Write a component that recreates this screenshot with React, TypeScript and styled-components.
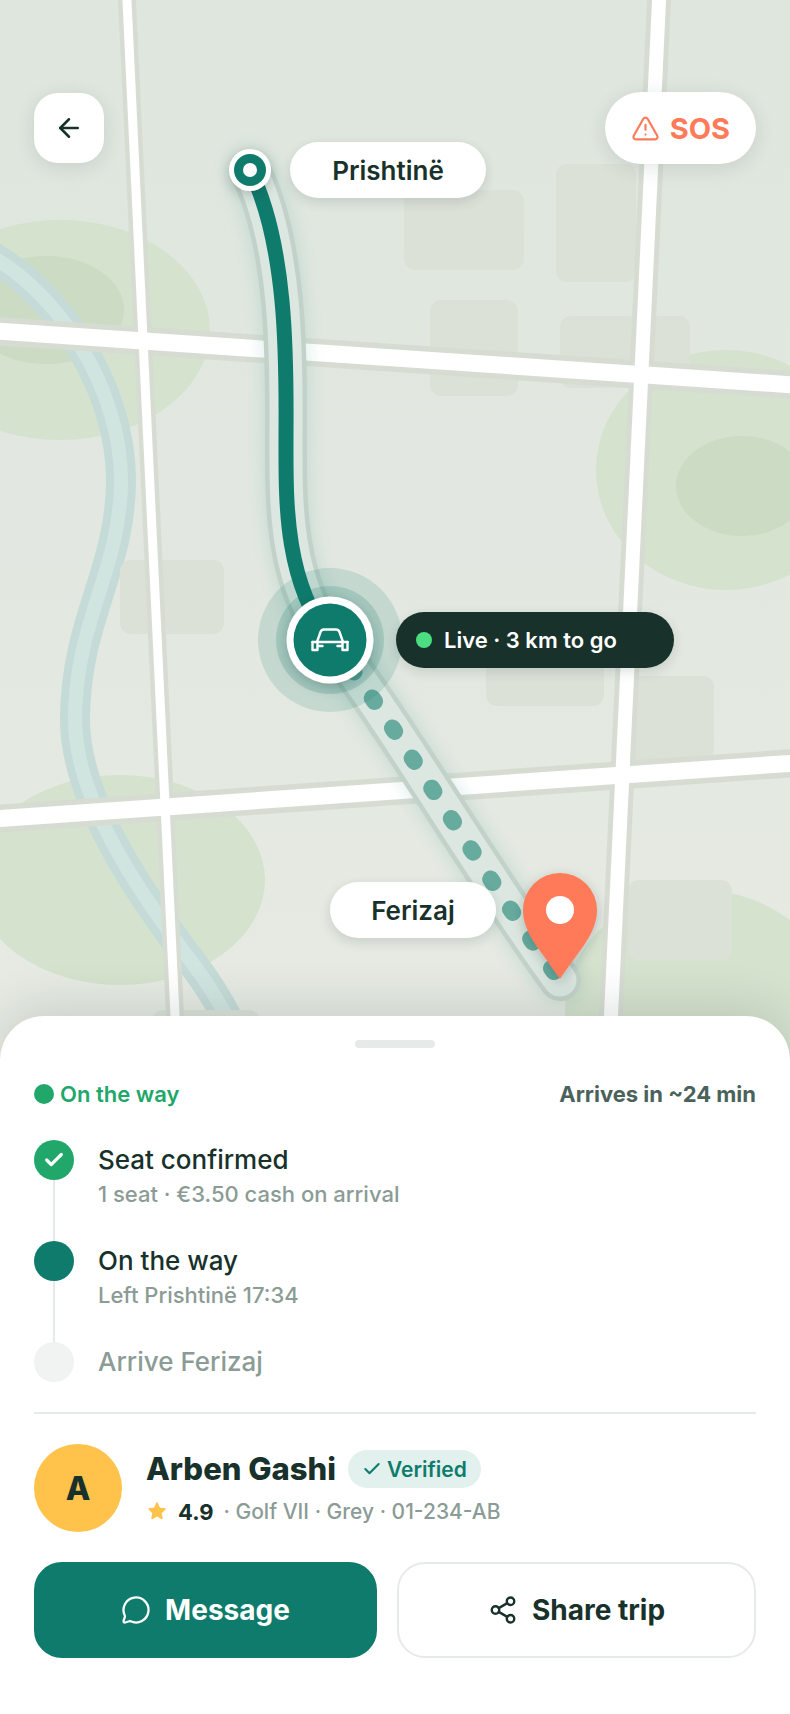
import React from 'react';
import styled, { createGlobalStyle } from 'styled-components';
import { ArrowLeft, Check, MessageCircle, Share2, TriangleAlert } from 'lucide-react';

const COLORS = {
    TEAL: '#0f7b6c',
    INK: '#18312b',
    MUTED: '#8b9b95',
    SLATE: '#4a625b',
    GREEN: '#21a76a',
    CORAL: '#ff7a59',
    AMBER: '#ffc24b',
    LINE: '#e6ebe9',
};

const MAP_WIDTH = 790;
const MAP_HEIGHT = 1060;

const GlobalStyle = createGlobalStyle`
    * {
        box-sizing: border-box;
    }

    body {
        margin: 0;
        background: #ffffff;
        color: ${COLORS.INK};
        font-family: Inter, "Liberation Sans", sans-serif;
    }

    button {
        font-family: inherit;
        cursor: pointer;
    }
`;

const Map = styled.section`
    position: relative;
    width: 100%;
    aspect-ratio: ${MAP_WIDTH} / ${MAP_HEIGHT};
    overflow: hidden;
`;

const MapSvg = styled.svg`
    position: absolute;
    top: 0;
    left: 0;
    width: 100%;
    height: 100%;
`;

const TopBar = styled.header`
    position: relative;
    display: flex;
    justify-content: space-between;
    align-items: center;
    padding: 92px 34px;
`;

const BackButton = styled.button`
    display: flex;
    align-items: center;
    justify-content: center;
    width: 70px;
    height: 70px;
    border: none;
    border-radius: 24px;
    background: #ffffff;
    color: ${COLORS.INK};
    box-shadow: 0 4px 20px rgba(24, 49, 43, 0.12);
`;

const SosButton = styled.button`
    display: flex;
    align-items: center;
    gap: 10px;
    height: 72px;
    padding: 0 26px;
    border: none;
    border-radius: 36px;
    background: #ffffff;
    color: ${COLORS.CORAL};
    font-size: 29px;
    font-weight: 700;
    box-shadow: 0 4px 20px rgba(24, 49, 43, 0.12);
`;

// x and y are in map units, so the labels follow the drawing when it scales
const MapLabel = styled.div<{ x: number; y: number; width: number; $dark?: boolean }>`
    position: absolute;
    left: calc(${p => p.x} / ${MAP_WIDTH} * 100%);
    top: calc(${p => p.y} / ${MAP_HEIGHT} * 100%);
    display: flex;
    align-items: center;
    justify-content: ${p => p.$dark ? 'flex-start' : 'center'};
    gap: 12px;
    min-width: ${p => p.width}px;
    height: 56px;
    padding: 0 20px;
    border-radius: 28px;
    background: ${p => p.$dark ? COLORS.INK : '#ffffff'};
    color: ${p => p.$dark ? '#ffffff' : COLORS.INK};
    font-size: ${p => p.$dark ? 22 : 26}px;
    font-weight: 600;
    white-space: nowrap;
    box-shadow: 0 4px 12px rgba(24, 49, 43, 0.14);
`;

const Dot = styled.span<{ size: number; color: string }>`
    width: ${p => p.size}px;
    height: ${p => p.size}px;
    border-radius: 50%;
    background: ${p => p.color};
`;

const Sheet = styled.main`
    position: relative;
    margin-top: -44px;
    padding: 24px 34px 56px;
    border-radius: 44px 44px 0 0;
    background: #ffffff;
    box-shadow: 0 -8px 48px rgba(24, 49, 43, 0.14);
`;

const Handle = styled.div`
    width: 80px;
    height: 8px;
    margin: 0 auto 30px;
    border-radius: 4px;
    background: ${COLORS.LINE};
`;

const StatusRow = styled.div`
    display: flex;
    justify-content: space-between;
    align-items: center;
    height: 32px;
    margin-bottom: 30px;
    font-size: 22px;
`;

const Status = styled.span`
    display: flex;
    align-items: center;
    gap: 6px;
    color: ${COLORS.GREEN};
    font-weight: 600;
`;

const Eta = styled.span`
    color: ${COLORS.SLATE};
    font-weight: 700;
`;

const Steps = styled.ol`
    margin: 0;
    padding: 0;
    list-style: none;
`;

const StepItem = styled.li`
    display: flex;
    gap: 24px;
`;

const StepTrack = styled.div`
    display: flex;
    flex-direction: column;
    align-items: center;
`;

const StepMarker = styled.span<{ color: string }>`
    display: flex;
    align-items: center;
    justify-content: center;
    width: 40px;
    height: 40px;
    border-radius: 50%;
    background: ${p => p.color};
    color: #ffffff;
`;

const StepLine = styled.span`
    flex: 1;
    width: 2px;
    background: ${COLORS.LINE};
`;

const StepBody = styled.div<{ $last: boolean }>`
    padding-bottom: ${p => p.$last ? 0 : 33}px;
`;

const StepTitle = styled.div<{ $muted: boolean }>`
    color: ${p => p.$muted ? COLORS.MUTED : COLORS.INK};
    font-size: 26px;
    font-weight: 500;
    line-height: 40px;
`;

const StepNote = styled.div`
    color: ${COLORS.MUTED};
    font-size: 22px;
    font-weight: 500;
    line-height: 28px;
`;

const Divider = styled.hr`
    height: 2px;
    margin: 30px 0;
    border: none;
    background: ${COLORS.LINE};
`;

const Driver = styled.div`
    display: flex;
    align-items: center;
    gap: 24px;
    margin-bottom: 30px;
`;

const Avatar = styled.div`
    display: flex;
    align-items: center;
    justify-content: center;
    width: 88px;
    height: 88px;
    border-radius: 50%;
    background: ${COLORS.AMBER};
    font-size: 32px;
    font-weight: 800;
`;

const DriverInfo = styled.div`
    display: flex;
    flex-direction: column;
    gap: 10px;
`;

const NameRow = styled.div`
    display: flex;
    align-items: center;
    gap: 12px;
`;

const Name = styled.h2`
    margin: 0;
    font-size: 31px;
    font-weight: 800;
    line-height: 38px;
`;

const Verified = styled.span`
    display: flex;
    align-items: center;
    gap: 5px;
    height: 38px;
    padding: 0 14px;
    border-radius: 19px;
    background: #e2f1ee;
    color: ${COLORS.TEAL};
    font-size: 21px;
    font-weight: 600;
`;

const Meta = styled.div`
    display: flex;
    align-items: center;
    gap: 10px;
    color: ${COLORS.MUTED};
    font-size: 21px;
    font-weight: 500;
    line-height: 28px;
`;

const Rating = styled.strong`
    color: ${COLORS.INK};
    font-size: 22px;
    font-weight: 700;
`;

const Actions = styled.div`
    display: grid;
    grid-template-columns: 343fr 359fr;
    gap: 20px;
`;

const ActionButton = styled.button<{ $primary?: boolean }>`
    display: flex;
    align-items: center;
    justify-content: center;
    gap: 14px;
    height: 96px;
    border: 2px solid ${p => p.$primary ? COLORS.TEAL : COLORS.LINE};
    border-radius: 28px;
    background: ${p => p.$primary ? COLORS.TEAL : '#ffffff'};
    color: ${p => p.$primary ? '#ffffff' : COLORS.INK};
    font-size: 28px;
    font-weight: 700;
`;

const RIVER = 'M-20 250 C60 290 121 390 121 480 C121 570 75 620 75 720 C75 810 160 920 196 968 C220 1000 240 1040 250 1070';
const DRIVEN = 'M250 170 C290 250 286 380 286 440 C286 500 284 580 330 640';
const AHEAD = 'M330 640 C390 715 486 880 560 980';

const BIG_ROADS = 'M-20 330 L810 386 M-20 820 L810 762';
const WEST_ROAD = 'M126 -20 L179 1100';
const EAST_ROAD = 'M660 -20 L607 1100';

const BLOCKS = [
    [404, 190, 120, 80],
    [556, 164, 80, 118],
    [430, 300, 88, 96],
    [560, 316, 130, 72],
    [120, 560, 104, 74],
    [486, 636, 118, 70],
    [624, 676, 90, 84],
    [628, 880, 104, 80],
    [152, 1010, 108, 70],
];

function MapDrawing() {
    return (
        <MapSvg viewBox={ `0 0 ${MAP_WIDTH} ${MAP_HEIGHT}` } role="img" aria-label="Route from Prishtinë to Ferizaj">
            <defs>
                <linearGradient id="land" x1="0" y1="0" x2="0" y2="1">
                    <stop offset="0" stopColor="#dee6de" />
                    <stop offset="1" stopColor="#e6eae3" />
                </linearGradient>
                <filter id="glow" x="-50%" y="-20%" width="200%" height="140%">
                    <feGaussianBlur stdDeviation="10" />
                </filter>
                <filter id="shadow" x="-50%" y="-50%" width="200%" height="200%">
                    <feDropShadow dx="0" dy="4" stdDeviation="6" floodColor={ COLORS.INK } floodOpacity="0.25" />
                </filter>
            </defs>

            <rect width={ MAP_WIDTH } height={ MAP_HEIGHT } fill="url(#land)" />

            <g fill="#d5e2ce">
                <ellipse cx="60" cy="330" rx="150" ry="110" />
                <ellipse cx="726" cy="470" rx="130" ry="120" />
                <ellipse cx="120" cy="880" rx="145" ry="105" />
                <ellipse cx="700" cy="1010" rx="135" ry="120" />
            </g>
            <g fill="#ccdbc4">
                <ellipse cx="46" cy="310" rx="78" ry="54" />
                <ellipse cx="742" cy="486" rx="66" ry="50" />
            </g>

            <g fill="none">
                <path d={ RIVER } stroke="#c5dbd7" strokeWidth="30" />
                <path d={ RIVER } stroke="#d1e5e0" strokeWidth="14" />
            </g>

            <g fill="#dce1d8">
                { BLOCKS.map(([x, y, width, height]) => (
                    <rect key={ `${x}-${y}` } x={ x } y={ y } width={ width } height={ height } rx="11" />
                )) }
            </g>

            <g fill="none" stroke="#d7dcd3">
                <path d={ BIG_ROADS } strokeWidth="28" />
                <path d={ WEST_ROAD } strokeWidth="18" />
                <path d={ EAST_ROAD } strokeWidth="24" />
            </g>
            <g fill="none" stroke="#ffffff">
                <path d={ BIG_ROADS } strokeWidth="17" />
                <path d={ WEST_ROAD } strokeWidth="9" />
                <path d={ EAST_ROAD } strokeWidth="14" />
            </g>

            <g fill="none" strokeLinecap="round" strokeLinejoin="round">
                <path d={ `${DRIVEN} ${AHEAD}` } stroke={ COLORS.TEAL } strokeWidth="40" opacity="0.16" filter="url(#glow)" />
                <path d={ `${DRIVEN} ${AHEAD}` } stroke="#c3d2c9" strokeWidth="42" />
                <path d={ `${DRIVEN} ${AHEAD}` } stroke="#dbe7e0" strokeWidth="33" />
                <path d={ AHEAD } stroke={ COLORS.TEAL } strokeWidth="17" strokeDasharray="4 32" opacity="0.57" />
                <path d={ DRIVEN } stroke={ COLORS.TEAL } strokeWidth="15" />
            </g>

            <circle cx="250" cy="170" r="21" fill="#ffffff" filter="url(#shadow)" />
            <circle cx="250" cy="170" r="16" fill={ COLORS.TEAL } />
            <circle cx="250" cy="170" r="7" fill="#ffffff" />

            <circle cx="330" cy="640" r="72" fill={ COLORS.TEAL } opacity="0.14" />
            <circle cx="330" cy="640" r="54" fill={ COLORS.TEAL } opacity="0.18" />
            <circle cx="330" cy="640" r="43.5" fill="#ffffff" filter="url(#shadow)" />
            <circle cx="330" cy="640" r="36.5" fill={ COLORS.TEAL } />
            <g fill="none" stroke="#ffffff" strokeWidth="2.4" strokeLinejoin="round" strokeLinecap="round">
                <path d="M317 642 L320.5 632 Q321.5 629.5 324 629.5 H336 Q338.5 629.5 339.5 632 L343 642" />
                <path d="M312.5 642 H347.5" />
                <path d="M312.5 642 V650 H317.5 V642 M342.5 642 V650 H347.5 V642" />
                <path d="M318 646 H322.5 M337.5 646 H342" />
            </g>

            <path
                d="M560 979 C541 950 523 934 523 910 A37 37 0 0 1 597 910 C597 934 579 950 560 979 Z"
                fill={ COLORS.CORAL }
                filter="url(#shadow)"
            />
            <circle cx="560" cy="910" r="14" fill="#ffffff" />
        </MapSvg>
    );
}

function Star() {
    return (
        <svg width="22" height="22" viewBox="0 0 22 22" aria-hidden="true">
            <path
                d="M11 2 L13.4 7.3 L19 8 L14.9 11.900 L16 17.5 L11 14.700 L6 17.5 L7.100 11.900 L3 8 L8.600 7.3 Z"
                fill={ COLORS.AMBER }
                stroke={ COLORS.AMBER }
                strokeWidth="1.5"
                strokeLinejoin="round"
            />
        </svg>
    );
}

interface StepProps {
    title: string;
    note?: string;
    color: string;
    done?: boolean;
    last?: boolean;
}

function Step(props: StepProps) {
    return (
        <StepItem>
            <StepTrack>
                <StepMarker color={ props.color }>
                    { props.done && <Check size={ 22 } strokeWidth={ 3.5 } /> }
                </StepMarker>
                { !props.last && <StepLine /> }
            </StepTrack>
            <StepBody $last={ !!props.last }>
                <StepTitle $muted={ !!props.last }>{ props.title }</StepTitle>
                { props.note && <StepNote>{ props.note }</StepNote> }
            </StepBody>
        </StepItem>
    );
}

export default function App() {
    return (
        <>
            <GlobalStyle />
            <Map>
                <MapDrawing />
                <TopBar>
                    <BackButton type="button" aria-label="Back">
                        <ArrowLeft size={ 30 } strokeWidth={ 2 } />
                    </BackButton>
                    <SosButton type="button">
                        <TriangleAlert size={ 29 } strokeWidth={ 1.8 } />
                        SOS
                    </SosButton>
                </TopBar>
                <MapLabel x={ 290 } y={ 142 } width={ 196 }>Prishtinë</MapLabel>
                <MapLabel x={ 396 } y={ 612 } width={ 278 } $dark>
                    <Dot size={ 16 } color="#4ade80" />
                    Live · 3 km to go
                </MapLabel>
                <MapLabel x={ 330 } y={ 882 } width={ 166 }>Ferizaj</MapLabel>
            </Map>
            <Sheet>
                <Handle />
                <StatusRow>
                    <Status>
                        <Dot size={ 20 } color={ COLORS.GREEN } />
                        On the way
                    </Status>
                    <Eta>Arrives in ~24 min</Eta>
                </StatusRow>
                <Steps>
                    <Step title="Seat confirmed" note="1 seat · €3.50 cash on arrival" color={ COLORS.GREEN } done />
                    <Step title="On the way" note="Left Prishtinë 17:34" color={ COLORS.TEAL } />
                    <Step title="Arrive Ferizaj" color="#f0f3f2" last />
                </Steps>
                <Divider />
                <Driver>
                    <Avatar>A</Avatar>
                    <DriverInfo>
                        <NameRow>
                            <Name>Arben Gashi</Name>
                            <Verified>
                                <Check size={ 20 } strokeWidth={ 2.5 } />
                                Verified
                            </Verified>
                        </NameRow>
                        <Meta>
                            <Star />
                            <Rating>4.9</Rating>
                            <span>· Golf VII · Grey · 01-234-AB</span>
                        </Meta>
                    </DriverInfo>
                </Driver>
                <Actions>
                    <ActionButton type="button" $primary>
                        <MessageCircle size={ 30 } strokeWidth={ 1.8 } />
                        Message
                    </ActionButton>
                    <ActionButton type="button">
                        <Share2 size={ 30 } strokeWidth={ 1.9 } />
                        Share trip
                    </ActionButton>
                </Actions>
            </Sheet>
        </>
    );
}
